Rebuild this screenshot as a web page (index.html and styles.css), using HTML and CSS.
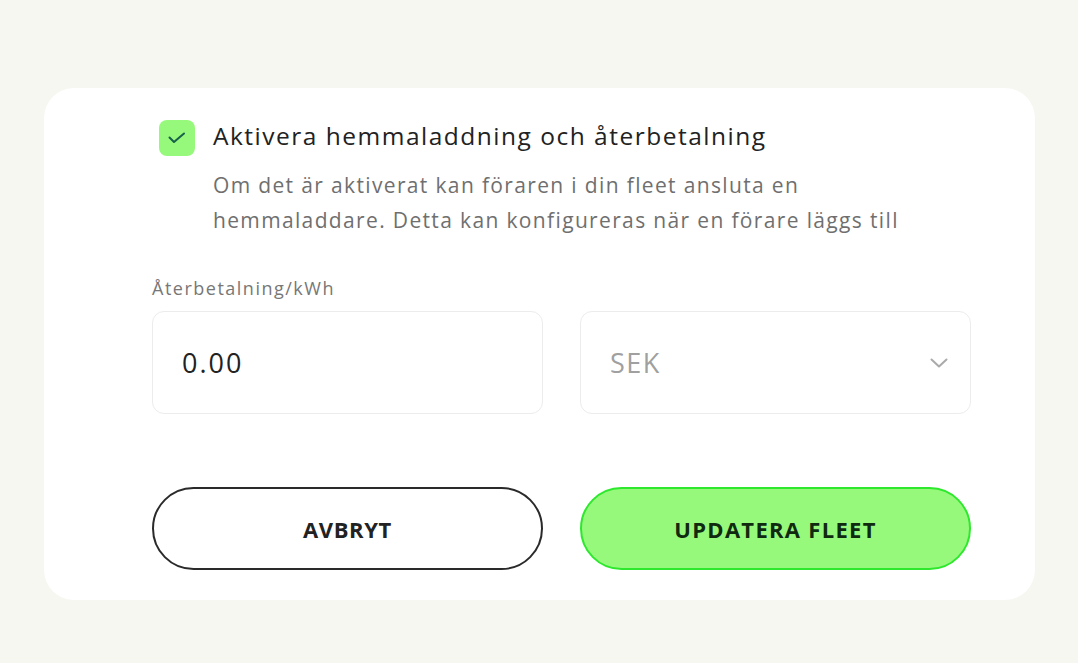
FILE: index.html
```html
<!DOCTYPE html>
<html lang="sv">
<head>
<meta charset="utf-8">
<title>Hemmaladdning</title>
<link rel="stylesheet" href="styles.css">
</head>
<body>
<main class="page">
  <section class="card">
    <div class="option">
      <span class="checkbox" role="checkbox" aria-checked="true">
        <svg viewBox="0 0 18 12" width="18" height="12" aria-hidden="true"><path d="M1.5 5.5l4.5 4.5 10-8.5" fill="none" stroke="#17604a" stroke-width="2" stroke-linecap="round" stroke-linejoin="round"/></svg>
      </span>
      <div class="option-text">
        <div class="option-title">Aktivera hemmaladdning och återbetalning</div>
        <p class="option-desc">Om det är aktiverat kan föraren i din fleet ansluta en hemmaladdare. Detta kan konfigureras när en förare läggs till</p>
      </div>
    </div>

    <div class="field-label">Återbetalning/kWh</div>
    <div class="row">
      <div class="input">0.00</div>
      <div class="input select">
        <span class="placeholder">SEK</span>
        <svg class="chev" viewBox="0 0 18 10" width="18" height="10" aria-hidden="true"><path d="M1.5 1.5L9 8.5l7.5-7" fill="none" stroke="#aaaaaa" stroke-width="2" stroke-linecap="round" stroke-linejoin="round"/></svg>
      </div>
    </div>

    <div class="row buttons">
      <button class="btn btn-outline">AVBRYT</button>
      <button class="btn btn-primary">UPDATERA FLEET</button>
    </div>
  </section>
</main>
</body>
</html>
```

FILE: styles.css
```css
* { box-sizing: border-box; }
html, body { margin: 0; padding: 0; }
body {
  background: #f5f7f0;
  font-family: "Open Sans", "Noto Sans", sans-serif;
  color: #222;
  width: 1078px;
  height: 663px;
  overflow: hidden;
}
.page {
  padding: 88px 43px 0 44px;
}
.card {
  width: 991px;
  height: 512px;
  background: #ffffff;
  border-radius: 30px;
  padding: 32px 64px 30px 108px;
}
.option {
  display: flex;
  align-items: flex-start;
  padding-left: 7px;
}
.checkbox {
  flex: none;
  width: 36px;
  height: 36px;
  border-radius: 8px;
  background: #96f97b;
  display: flex;
  align-items: center;
  justify-content: center;
}
.option-text {
  margin-left: 18px;
}
.option-title {
  font-size: 24.5px;
  letter-spacing: 1.5px;
  line-height: 32px;
  color: #222;
}
.option-desc {
  margin: 16px 0 0;
  font-size: 21px;
  letter-spacing: 1.35px;
  line-height: 35px;
  color: #6f6f6f;
  width: 720px;
}
.field-label {
  margin-top: 38px;
  font-size: 18px;
  letter-spacing: 1.5px;
  line-height: 24px;
  color: #777;
}
.row {
  display: grid;
  grid-template-columns: 1fr 1fr;
  gap: 37px;
}
.input {
  margin-top: 11px;
  height: 103px;
  border: 1px solid #ececec;
  border-radius: 12px;
  padding: 0 29px;
  display: flex;
  align-items: center;
  font-size: 27px;
  letter-spacing: 2px;
  color: #222;
}
.select {
  justify-content: space-between;
  padding-right: 22px;
  letter-spacing: 1.5px;
}
.placeholder { color: #a0a0a0; }
.buttons {
  margin-top: 73px;
}
.btn {
  height: 83px;
  border-radius: 42px;
  font-family: inherit;
  font-weight: 700;
  font-size: 22px;
  letter-spacing: 0.6px;
  cursor: pointer;
}
.btn-outline {
  background: #fff;
  border: 2px solid #2a2a2a;
  color: #222;
}
.btn-primary {
  background: #96f97b;
  border: 2px solid #2ee82e;
  color: #0f2a0f;
  letter-spacing: 1.3px;
}
```
